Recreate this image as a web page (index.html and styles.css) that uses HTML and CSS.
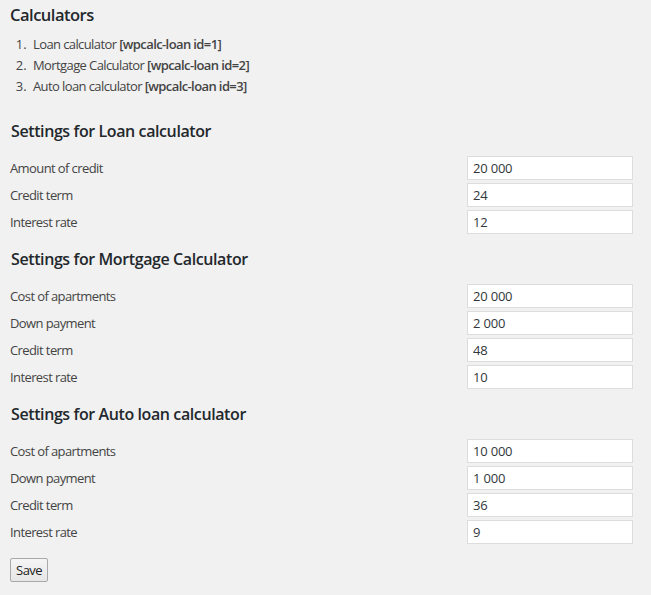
FILE: index.html
```html
<!DOCTYPE html>
<html>
<head>
<meta charset="utf-8">
<link rel="stylesheet" href="styles.css">
</head>
<body>
<div class="wrap">
  <h2 class="title">Calculators</h2>
  <ol class="calc-list">
    <li>Loan calculator <b>[wpcalc-loan id=1]</b></li>
    <li>Mortgage Calculator <b>[wpcalc-loan id=2]</b></li>
    <li>Auto loan calculator <b>[wpcalc-loan id=3]</b></li>
  </ol>

  <h3 class="section">Settings for Loan calculator</h3>
  <div class="row"><label>Amount of credit</label><input type="text" value="20 000"></div>
  <div class="row"><label>Credit term</label><input type="text" value="24"></div>
  <div class="row"><label>Interest rate</label><input type="text" value="12"></div>

  <h3 class="section">Settings for Mortgage Calculator</h3>
  <div class="row"><label>Cost of apartments</label><input type="text" value="20 000"></div>
  <div class="row"><label>Down payment</label><input type="text" value="2 000"></div>
  <div class="row"><label>Credit term</label><input type="text" value="48"></div>
  <div class="row"><label>Interest rate</label><input type="text" value="10"></div>

  <h3 class="section">Settings for Auto loan calculator</h3>
  <div class="row"><label>Cost of apartments</label><input type="text" value="10 000"></div>
  <div class="row"><label>Down payment</label><input type="text" value="1 000"></div>
  <div class="row"><label>Credit term</label><input type="text" value="36"></div>
  <div class="row"><label>Interest rate</label><input type="text" value="9"></div>

  <div class="actions"><button class="save" type="button">Save</button></div>
</div>
</body>
</html>
```

FILE: styles.css
```css
html, body {
  margin: 0;
  padding: 0;
  background: #f1f1f1;
}
body {
  font-family: "Open Sans", "Noto Sans", sans-serif;
  font-size: 13px;
  letter-spacing: -0.6px;
  color: #444;
}
.wrap {
  margin: 0 18px 0 10px;
  padding-top: 4px;
}
.title {
  margin: 0;
  font-size: 16.5px;
  line-height: 22px;
  font-weight: 600;
  letter-spacing: -0.5px;
  color: #23282d;
}
.calc-list {
  margin: 8px 0 10px 0;
  padding-left: 20px;
}
.calc-list li {
  line-height: 21px;
  padding-left: 3px;
}
.calc-list li::marker {
  letter-spacing: 0;
}
.calc-list b {
  font-weight: 600;
}
.section {
  margin: 0;
  padding: 14px 0 12px 1px;
  font-size: 16px;
  line-height: 21px;
  font-weight: 600;
  letter-spacing: -0.4px;
  color: #23282d;
}
.row {
  display: flex;
  justify-content: space-between;
  align-items: center;
  height: 27px;
}
.row label {
  line-height: 20px;
}
.row input {
  box-sizing: border-box;
  width: 166px;
  height: 24px;
  margin: 0 0 0 auto;
  padding: 0 5px;
  border: 1px solid #ddd;
  background: #fff;
  font-family: "Open Sans", "Noto Sans", sans-serif;
  font-size: 13px;
  letter-spacing: -0.2px;
  color: #32373c;
  outline: none;
}
.actions {
  padding-top: 13px;
}
.save {
  box-sizing: border-box;
  height: 24px;
  padding: 0 5px;
  margin: 0;
  border: 1px solid #a9a9a9;
  border-radius: 2px;
  background: linear-gradient(#f5f5f5, #e6e6e6);
  font-family: "Open Sans", "Noto Sans", sans-serif;
  font-size: 13px;
  letter-spacing: -0.5px;
  color: #222;
}
```
